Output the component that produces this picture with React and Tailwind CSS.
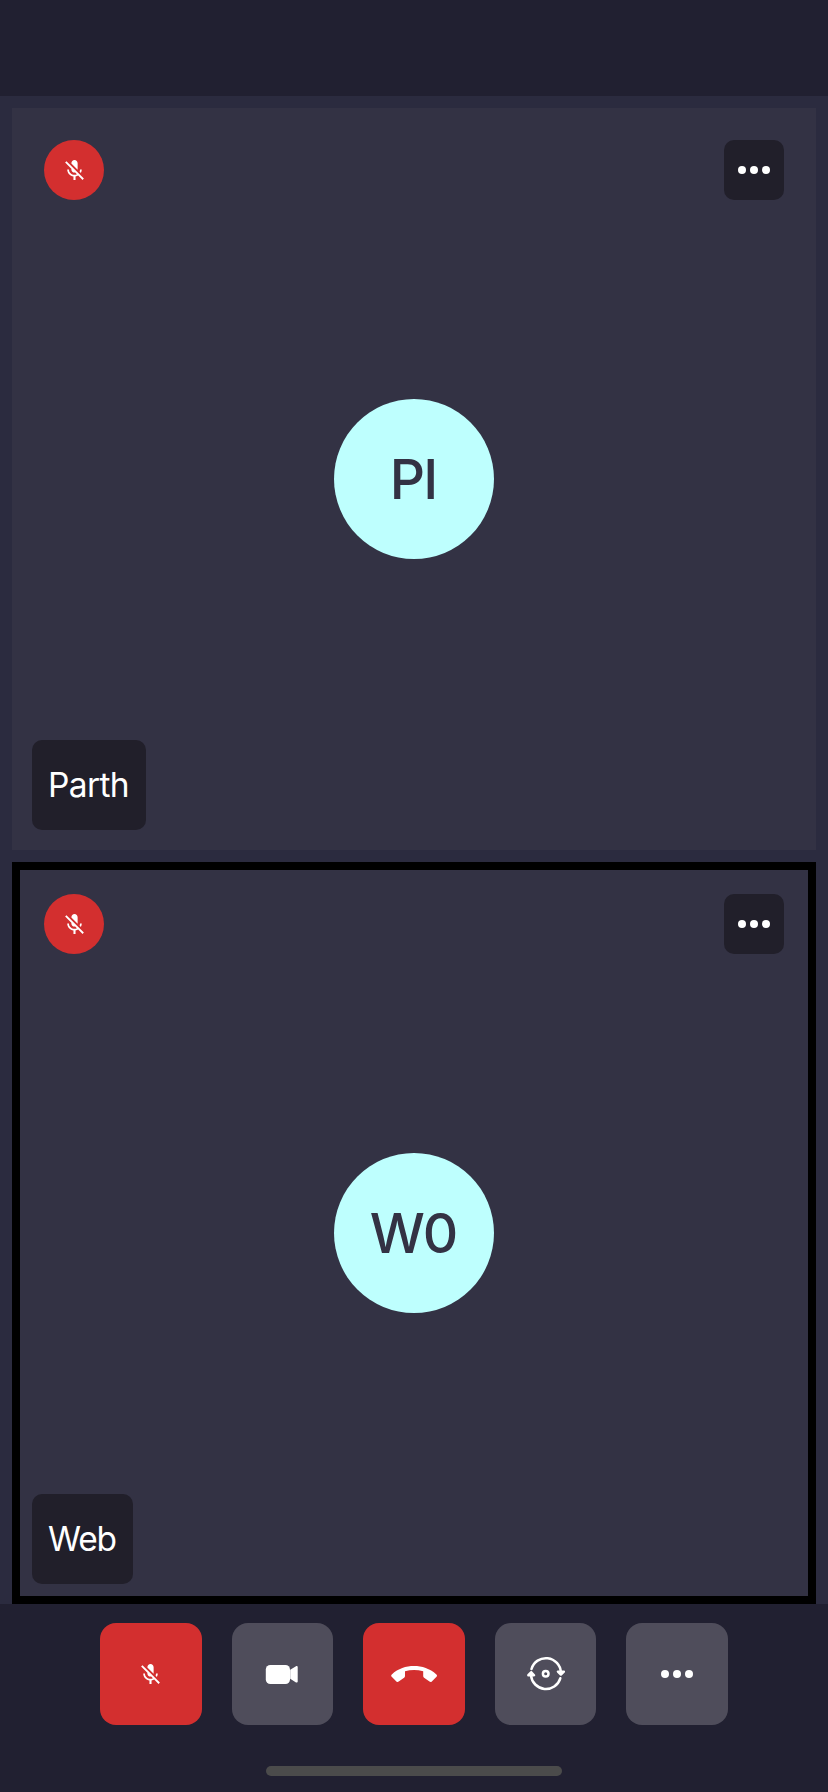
function MicOff() {
  return (
    <svg viewBox="0 0 24 24" className="size-[25px]" fill="currentColor">
      <path d="M19 11h-1.7c0 .74-.16 1.43-.43 2.05l1.23 1.23c.56-.98.9-2.09.9-3.28zm-4.02.17c0-.06.02-.11.02-.17V5c0-1.66-1.34-3-3-3S9 3.34 9 5v.18l5.98 5.99zM4.27 3L3 4.27l6.01 6.01V11c0 1.66 1.33 3 2.99 3 .22 0 .44-.03.65-.08l1.66 1.66c-.71.33-1.5.52-2.31.52-2.76 0-5.3-2.1-5.3-5.1H5c0 3.41 2.72 6.23 6 6.72V21h2v-3.28c.91-.13 1.77-.45 2.54-.9L19.73 21 21 19.73 4.27 3z" />
    </svg>
  );
}

function Dots() {
  return (
    <svg viewBox="0 0 32 8" className="h-2 w-8" fill="currentColor">
      <circle cx="4" cy="4" r="4" />
      <circle cx="16" cy="4" r="4" />
      <circle cx="28" cy="4" r="4" />
    </svg>
  );
}

function Camera() {
  return (
    <svg viewBox="0 0 48 48" className="size-12" fill="currentColor">
      <rect x="7.8" y="15" width="24.2" height="19" rx="4.5" />
      <path d="M32.2 19.8 38 16.2c.8-.5 1.7 0 1.7.9v14.4c0 .9-.9 1.4-1.7.9l-5.800-3.600z" />
    </svg>
  );
}

function HangUp() {
  return (
    <svg viewBox="0 0 48 48" className="size-12" fill="currentColor">
      <path d="M24 16.1c8 0 15.8 2.6 22.4 8.3.8.7.8 1.6.1 2.3l-4.7 4.7c-.7.7-1.5.7-2.3.1l-5.4-3.8c-.6-.4-.9-.9-.9-1.6v-4.9c-6-1.7-12.4-1.7-18.2 0v4.9c0 .7-.3 1.2-.9 1.6l-5.400 3.800c-.8.6-1.600.6-2.300-.1l-4.700-4.700c-.7-.7-.7-1.600.1-2.300C8.200 18.700 16 16.100 24 16.100z" />
    </svg>
  );
}

function SwitchCamera() {
  return (
    <svg viewBox="0 0 48 48" className="size-12" fill="none" stroke="currentColor" strokeWidth="2.5" strokeLinecap="round">
      <path d="M9.5 19a15 15 0 0 1 29.4 3.5" />
      <path d="M38.3 28.3a15 15 0 0 1-29.3-3" />
      <circle cx="23.7" cy="23.7" r="2.8" />
      <path d="M6.3 25.2 9.3 22.2 12.1 25.2zM35.9 21.6h6L38.9 24.6z" fill="currentColor" strokeWidth="2.4" strokeLinejoin="round" />
    </svg>
  );
}

function Tile({ initials, name, active, labelClass }) {
  return (
    <section
      className={`flex h-[742px] flex-col justify-between border-8 bg-[#333244] px-6 ${
        active ? "border-black" : "border-[#333244]"
      }`}
    >
      <div className="flex justify-between pt-6">
        <div className="flex size-[60px] items-center justify-center rounded-full bg-[#d32f2f]">
          <MicOff />
        </div>
        <button className="flex size-[60px] items-center justify-center rounded-[10px] bg-[#211f2a]">
          <Dots />
        </button>
      </div>
      <div className="mt-[18px] flex size-40 items-center justify-center self-center rounded-full bg-[#befffe] pr-[2px] text-[55px] font-medium tracking-[-2px] text-[#333244]">
        {initials}
      </div>
      <div
        className={`mb-3 -ml-3 flex h-[90px] items-center justify-center rounded-[10px] bg-[#211f2a] pt-px pr-px text-[33.5px] ${labelClass}`}
      >
        {name}
      </div>
    </section>
  );
}

function Control({ danger, children }) {
  return (
    <button
      className={`flex h-[102px] flex-1 items-center justify-center rounded-2xl ${
        danger ? "bg-[#d32f2f]" : "bg-[#4f4d5b]"
      }`}
    >
      {children}
    </button>
  );
}

export default function App() {
  return (
    <div className="flex h-[1792px] w-[828px] flex-col bg-[#212031] font-['Inter',sans-serif] text-white">
      <header className="h-24" />
      <main className="flex h-[1508px] flex-col gap-3 bg-[#2b2b3f] px-3 pt-3">
        <Tile initials="PI" name="Parth" labelClass="w-[114px] tracking-[-0.6px]" />
        <Tile initials="W0" name="Web" active labelClass="w-[101px] tracking-[-1.1px]" />
      </main>
      <footer className="flex flex-1 flex-col items-center pt-[19px]">
        <div className="flex w-[628px] gap-[30px]">
          <Control danger><MicOff /></Control>
          <Control><Camera /></Control>
          <Control danger><HangUp /></Control>
          <Control><SwitchCamera /></Control>
          <Control><Dots /></Control>
        </div>
        <div className="mt-[41px] h-2.5 w-[296px] rounded-full bg-[#4b4b4b]" />
      </footer>
    </div>
  );
}
